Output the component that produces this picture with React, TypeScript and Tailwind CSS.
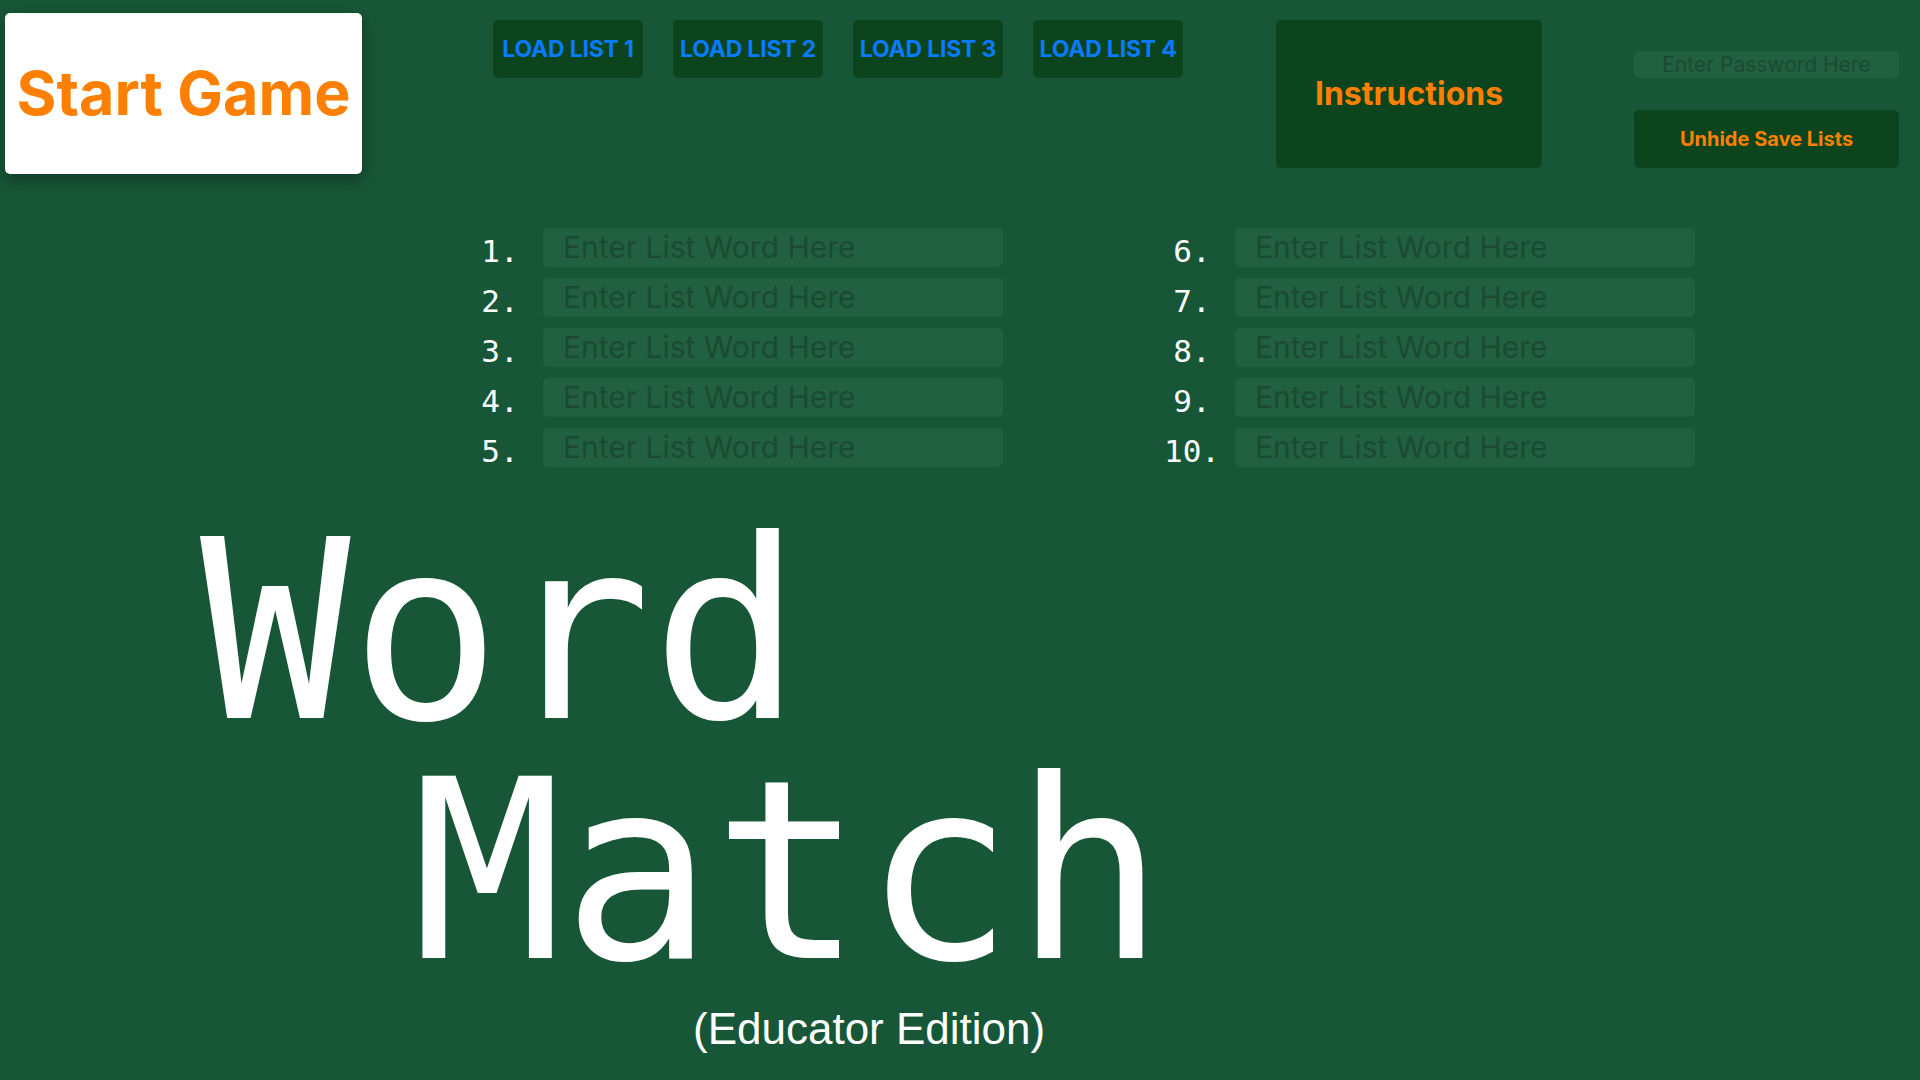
import React from "react";

const inter = { fontFamily: "Inter, 'Noto Sans', sans-serif" };

function ListRow({ n }: { n: number }) {
  return (
    <div className="flex items-center h-[39px]">
      <div
        className="w-[70px] text-center text-white text-[31px] leading-none pt-[7px]"
        style={{ fontFamily: "'DejaVu Sans Mono', monospace" }}
      >
        {n}.
      </div>
      <input
        className="ml-[8px] w-[460px] h-[39px] rounded-[5px] bg-[#216040] pl-[20px] text-[30px] text-white placeholder:text-[#1a4b32] outline-none"
        style={inter}
        placeholder="Enter List Word Here"
      />
    </div>
  );
}

export default function App() {
  return (
    <div className="w-[1920px] h-[1080px] bg-[#175737] overflow-hidden" style={inter}>
      {/* top bar */}
      <div className="flex items-start">
        <button className="ml-[5px] mt-[13px] w-[357px] h-[161px] bg-white rounded-[5px] shadow-[0_6px_16px_rgba(0,0,0,0.35)] flex items-center justify-center text-[61px] font-bold text-[#ff8000]">
          Start Game
        </button>
        <div className="ml-[131px] mt-[20px] flex gap-[30px]">
          {[1, 2, 3, 4].map((i) => (
            <button
              key={i}
              className="w-[150px] h-[58px] rounded-[5px] bg-[#0c441e] flex items-center justify-center text-[23px] font-bold text-[#0a7aff] tracking-[-0.2px]"
            >
              LOAD LIST {i}
            </button>
          ))}
        </div>
        <button className="ml-[93px] mt-[20px] w-[266px] h-[148px] rounded-[5px] bg-[#0c441e] flex items-center justify-center text-[32px] font-bold text-[#ff8000]">
          Instructions
        </button>
        <div className="ml-[92px] mt-[51px] w-[265px] flex flex-col">
          <input
            className="h-[27px] rounded-[5px] bg-[#216040] text-center text-[21px] text-white placeholder:text-[#1a4b32] outline-none"
            style={inter}
            placeholder="Enter Password Here"
          />
          <button className="mt-[32px] h-[58px] rounded-[5px] bg-[#0c441e] flex items-center justify-center text-[20px] font-bold text-[#ff8000]">
            Unhide Save Lists
          </button>
        </div>
      </div>

      {/* word list */}
      <div className="mt-[54px] ml-[465px] flex gap-[154px]">
        <div className="flex flex-col gap-[11px]">
          {[1, 2, 3, 4, 5].map((n) => (
            <ListRow key={n} n={n} />
          ))}
        </div>
        <div className="flex flex-col gap-[11px]">
          {[6, 7, 8, 9, 10].map((n) => (
            <ListRow key={n} n={n} />
          ))}
        </div>
      </div>

      {/* title */}
      <div
        className="mt-[46px] text-white text-[250px] leading-[237px]"
        style={{ fontFamily: "'DejaVu Sans Mono', monospace" }}
      >
        <div className="ml-[200px]">Word</div>
        <div className="ml-[412px] mt-[3px]">Match</div>
      </div>
      <div
        className="mt-[17px] ml-[693px] text-white text-[44px] leading-none"
        style={{ fontFamily: "'Liberation Sans', Arial, sans-serif" }}
      >
        (Educator Edition)
      </div>
    </div>
  );
}
